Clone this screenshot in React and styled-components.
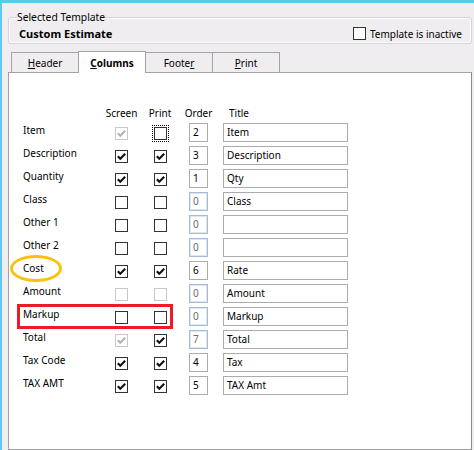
import React from "react";
import styled, { createGlobalStyle, css } from "styled-components";

const Global = createGlobalStyle`
  html, body { margin: 0; padding: 0; }
  body {
    background: #f0edf0;
    font-family: "Noto Sans", "Open Sans", sans-serif;
    font-size: 10px;
    color: #000;
  }
`;

const Window = styled.div`
  box-sizing: border-box;
  width: 474px;
  height: 450px;
  overflow: hidden;
  border-top: 3px solid #5fc6ee;
  border-left: 2px solid #5fc6ee;
  padding: 7px 2px 0 6px;
  display: flex;
  flex-direction: column;
`;

const Group = styled.fieldset`
  margin: 0;
  border: 1px solid #d6d6d6;
  border-radius: 3px;
  box-shadow: inset 0 0 0 1px #fbfbfb;
  padding: 0 9px 0 8px;
`;

const Legend = styled.legend`
  padding: 0;
  line-height: 14px;
  font-size: 10.3px;
`;

const GroupBody = styled.div`
  height: 19px;
  display: flex;
  align-items: center;
  justify-content: space-between;
`;

const Title = styled.div`
  font-weight: bold;
  font-size: 11px;
  margin-left: 2px;
  line-height: 14px;
  margin-top: 1px;
`;

const InlineCheck = styled.label`
  display: flex;
  align-items: center;
  gap: 4px;
  line-height: 14px;
`;

const TabStrip = styled.div`
  display: flex;
  align-items: flex-end;
  margin-top: 7px;
  padding-left: 3px;
  position: relative;
  z-index: 1;
`;

const Tab = styled.div`
  box-sizing: border-box;
  width: 68px;
  height: 20px;
  margin-left: -1px;
  &:first-child { margin-left: 0; }
  border: 1px solid #a3a3a3;
  border-bottom: none;
  background: #f0edf0;
  display: flex;
  align-items: center;
  justify-content: center;
  line-height: 14px;
  padding-top: 1px;
  ${(p) =>
    p.$active &&
    css`
      height: 22px;
      margin-bottom: -1px;
      background: #fff;
      font-weight: bold;
      position: relative;
      padding-top: 0;
    `}
`;

const Panel = styled.div`
  flex: 1;
  background: #fff;
  border: 1px solid #a3a3a3;
  border-right-color: #8a8a8a;
  padding: 33px 0 0 14px;
`;

const Row = styled.div`
  display: grid;
  grid-template-columns: 79px 39px 38px 39px 130px;
  height: ${(p) => (p.$head ? "14px" : "19px")};
  margin-bottom: ${(p) => (p.$head ? "3px" : "4px")};
  position: relative;
  line-height: 14px;
`;

const HeadCell = styled.div`
  text-align: ${(p) => (p.$left ? "left" : "center")};
  padding-left: ${(p) => (p.$left ? "11px" : "0")};
`;

const Label = styled.div`
  line-height: 14px;
  white-space: nowrap;
`;

const Box = styled.span`
  box-sizing: border-box;
  display: inline-flex;
  width: 13px;
  height: 13px;
  background: #fff;
  border: 1px solid ${(p) => (p.$disabled ? "#c8c8c8" : "#333")};
  color: ${(p) => (p.$disabled ? "#b3b3b3" : "#111")};
  flex-shrink: 0;
  ${(p) =>
    p.$focus &&
    css`
      outline: 1px dotted #000;
      outline-offset: 1px;
    `}
`;

const CheckCell = styled.div`
  justify-self: center;
  align-self: start;
  margin-top: 4px;
  display: flex;
`;

const OrderBox = styled.div`
  box-sizing: border-box;
  justify-self: center;
  width: 19px;
  height: 19px;
  padding-left: 3px;
  line-height: 17px;
  border: 1px solid ${(p) => (p.$disabled ? "#a7bbd6" : "#acacac")};
  box-shadow: ${(p) => (p.$disabled ? "inset 0 0 0 1px #dde7f3" : "none")};
  color: ${(p) => (p.$disabled ? "#6d6d6d" : "#000")};
  background: #fff;
`;

const TitleBox = styled.div`
  box-sizing: border-box;
  margin-left: 5px;
  width: 125px;
  height: 19px;
  padding-left: 3px;
  line-height: 17px;
  border: 1px solid #acacac;
  background: #fff;
  white-space: nowrap;
  overflow: hidden;
`;

const Ellipse = styled.div`
  position: absolute;
  left: -13px;
  top: -6px;
  width: 52px;
  height: 27px;
  box-sizing: border-box;
  border: 3px solid #fcc10d;
  border-radius: 50%;
  pointer-events: none;
`;

const RedRect = styled.div`
  position: absolute;
  left: -6px;
  top: -3px;
  width: 156px;
  height: 25px;
  box-sizing: border-box;
  border: 3px solid #ed1c24;
  pointer-events: none;
`;

function CheckBox({ checked, disabled, focus }) {
  return (
    <Box $disabled={disabled} $focus={focus}>
      {checked && (
        <svg width="11" height="11" viewBox="0 0 11 11">
          <path
            d="M1.8 5.2 L4.3 7.8 L9.2 2.8"
            fill="none"
            stroke="currentColor"
            strokeWidth="2.1"
          />
        </svg>
      )}
    </Box>
  );
}

const rows = [
  { label: "Item", s: { c: 1, d: 1 }, p: { f: 1 }, o: "2", t: "Item" },
  { label: "Description", s: { c: 1 }, p: { c: 1 }, o: "3", t: "Description" },
  { label: "Quantity", s: { c: 1 }, p: { c: 1 }, o: "1", t: "Qty" },
  { label: "Class", s: {}, p: {}, o: "0", od: 1, t: "Class" },
  { label: "Other 1", s: {}, p: {}, o: "0", od: 1, t: "" },
  { label: "Other 2", s: {}, p: {}, o: "0", od: 1, t: "" },
  { label: "Cost", s: { c: 1 }, p: { c: 1 }, o: "6", t: "Rate", mark: "ellipse" },
  { label: "Amount", s: { d: 1 }, p: { d: 1 }, o: "0", od: 1, t: "Amount" },
  { label: "Markup", s: {}, p: {}, o: "0", od: 1, t: "Markup", mark: "rect" },
  { label: "Total", s: { c: 1, d: 1 }, p: { c: 1 }, o: "7", od: 1, t: "Total" },
  { label: "Tax Code", s: { c: 1 }, p: { c: 1 }, o: "4", t: "Tax" },
  { label: "TAX AMT", s: { c: 1 }, p: { c: 1 }, o: "5", t: "TAX Amt" },
];

export default function App() {
  return (
    <>
      <Global />
      <Window>
        <Group>
          <Legend>Selected Template</Legend>
          <GroupBody>
            <Title>Custom Estimate</Title>
            <InlineCheck>
              <CheckBox />
              <span>Template is inactive</span>
            </InlineCheck>
          </GroupBody>
        </Group>
        <TabStrip>
          <Tab>
            <span><u>H</u>eader</span>
          </Tab>
          <Tab $active>
            <span><u>C</u>olumns</span>
          </Tab>
          <Tab>
            <span>Foote<u>r</u></span>
          </Tab>
          <Tab>
            <span><u>P</u>rint</span>
          </Tab>
        </TabStrip>
        <Panel>
          <Row $head>
            <div />
            <HeadCell>Screen</HeadCell>
            <HeadCell>Print</HeadCell>
            <HeadCell>Order</HeadCell>
            <HeadCell $left>Title</HeadCell>
          </Row>
          {rows.map((r) => (
            <Row key={r.label}>
              {r.mark === "ellipse" && <Ellipse />}
              {r.mark === "rect" && <RedRect />}
              <Label>{r.label}</Label>
              <CheckCell>
                <CheckBox checked={r.s.c} disabled={r.s.d} focus={r.s.f} />
              </CheckCell>
              <CheckCell>
                <CheckBox checked={r.p.c} disabled={r.p.d} focus={r.p.f} />
              </CheckCell>
              <OrderBox $disabled={r.od}>{r.o}</OrderBox>
              <TitleBox>{r.t}</TitleBox>
            </Row>
          ))}
        </Panel>
      </Window>
    </>
  );
}
